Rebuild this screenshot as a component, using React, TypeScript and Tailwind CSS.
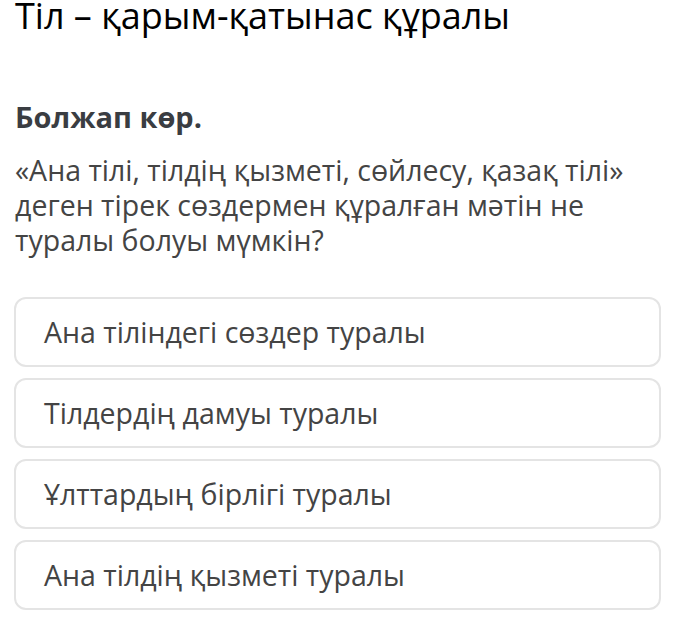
const options = [
  'Ана тіліндегі сөздер туралы',
  'Тілдердің дамуы туралы',
  'Ұлттардың бірлігі туралы',
  'Ана тілдің қызметі туралы',
];

export default function App() {
  return (
    <div className="min-h-screen overflow-hidden bg-white font-['Open_Sans',sans-serif]">
      <h1 className="-mt-[6px] pl-[15px] text-[36px] leading-[44px] text-black">Тіл – қарым-қатынас құралы</h1>
      <div className="mt-[60px] px-[14px]">
        <h2 className="pl-px text-[29px] font-bold leading-[38px] text-[#3a3d42]">Болжап көр.</h2>
        <p className="mt-[17px] pl-px text-[28.5px] leading-[35px] text-[#444]">
          «Ана тілі, тілдің қызметі, сөйлесу, қазақ тілі» деген тірек сөздермен құралған мәтін не туралы болуы мүмкін?
        </p>
        <div className="mt-[39px] flex w-[647px] flex-col gap-[11px]">
          {options.map((o) => (
            <div
              key={o}
              className="flex h-[70px] items-center rounded-[12px] border-2 border-[#e4e4e4] px-[28px] text-[28.5px] text-[#444]"
            >
              {o}
            </div>
          ))}
        </div>
      </div>
    </div>
  );
}
